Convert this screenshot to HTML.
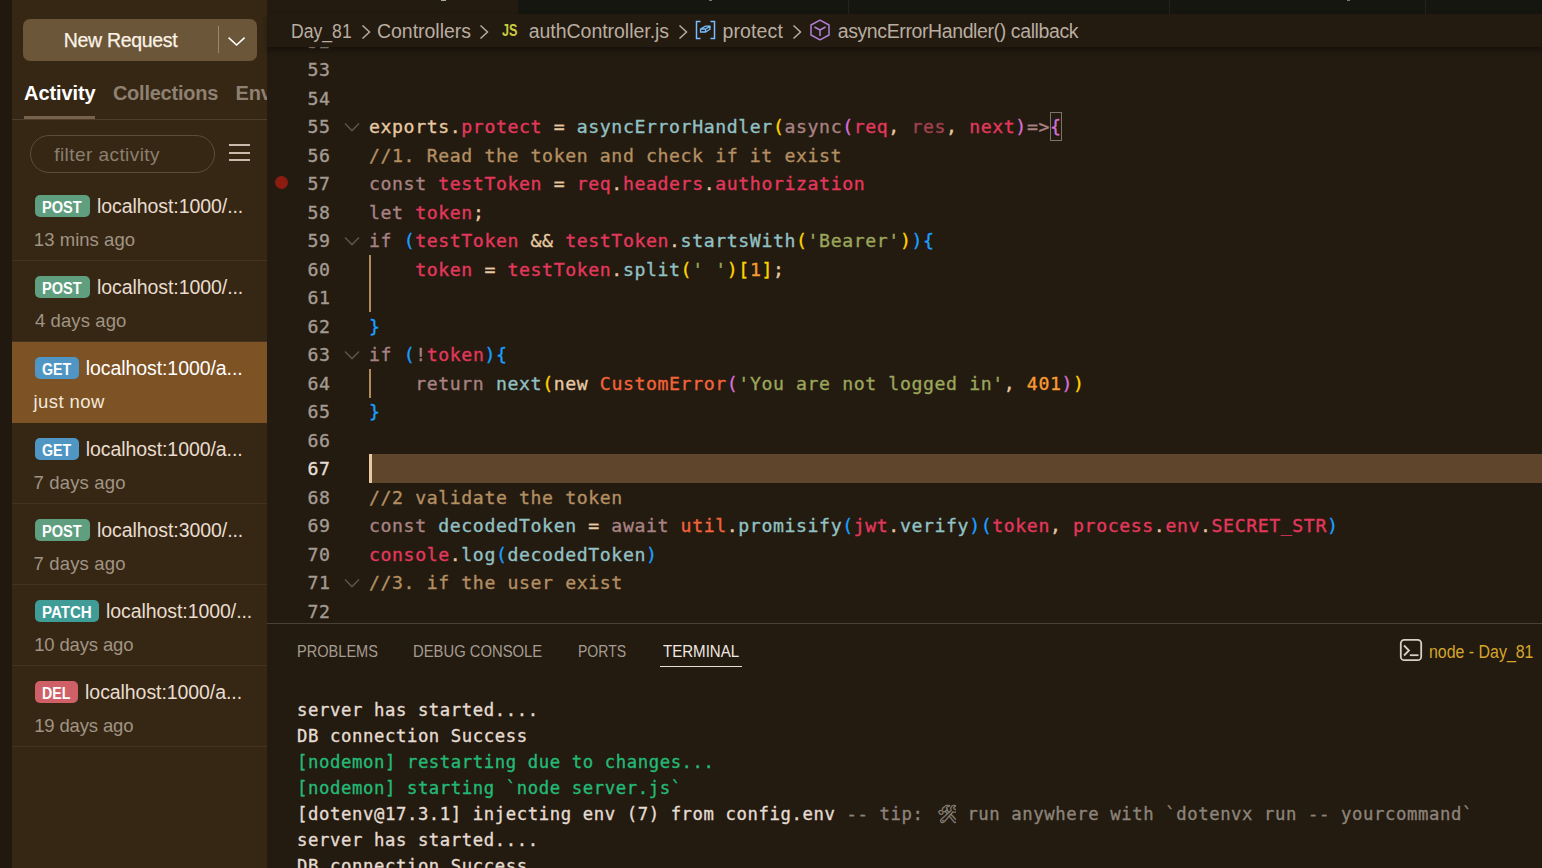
<!DOCTYPE html>
<html lang="en">
<head>
<meta charset="utf-8">
<title>authController.js - Day_81</title>
<style>
*{box-sizing:border-box;margin:0;padding:0}
html,body{width:1542px;height:868px;overflow:hidden;background:#231a10}
body{position:relative;font-family:"Liberation Sans",sans-serif;color:#e8dccf}
.abs{position:absolute}
/* ---------- left strip + sidebar ---------- */
#strip{left:0;top:0;width:12px;height:868px;background:#211810}
#side{left:12px;top:0;width:255px;height:868px;background:#362714;overflow:hidden}
#newreq{left:11px;top:19px;width:234px;height:42px;background:#6b5639;border-radius:7px}
#newreq .t{left:40.8px;top:0;height:42px;line-height:42px;font-size:19.5px;color:#fbf3e6;letter-spacing:-0.32px;white-space:nowrap;-webkit-text-stroke:.25px}
#newreq .d{left:195px;top:7px;width:1px;height:27px;background:#9a8769}
#tabs span{position:absolute;top:79.5px;font-weight:bold;font-size:20px;line-height:26px;white-space:nowrap}
#tabline{left:0;top:119px;width:255px;height:1px;background:#4d3d2b}
#tabul{left:12px;top:116px;width:71px;height:3px;background:#77634b}
#filter{left:18px;top:135px;width:185px;height:38px;border:1px solid #5c4c39;border-radius:19px}
#filter span{position:absolute;left:23.2px;top:0px;line-height:38px;font-size:19px;color:#8c7f70;letter-spacing:0.44px;white-space:nowrap}
.hb{left:217px;width:21px;height:2px;background:#c9bcae}
.item{left:0;width:255px;height:81px;border-bottom:1px solid #42321f}
.item.sel{background:#7d5225;border-bottom-color:#7d5225}
.badge{position:absolute;left:23px;top:15px;height:22px;border-radius:5px}
.badge b{position:absolute;left:7px;top:1.5px;color:#fff;font-weight:bold;font-size:16px;line-height:22px;white-space:nowrap;transform-origin:0 50%}
.url{position:absolute;top:12px;font-size:19.5px;line-height:28px;color:#e8dccf;white-space:nowrap;letter-spacing:-0.07px}
.ago{position:absolute;left:22px;top:47px;font-size:18.5px;line-height:26px;color:#a09484;white-space:nowrap}
.sel .ago{color:#f3e9dc}
.sel .url{color:#fff}
.post{background:#5f9e7e;width:55px}
.get{background:#4f96c4;width:44px}
.patch{background:#3f9c97;width:64px}
.del{background:#cf6068;width:43px}
/* ---------- editor ---------- */
#tabstrip{left:518px;top:0;width:1024px;height:14px;background:#15160f}
.tsep{top:0;width:1px;height:14px;background:#27231a}
#crumbs{left:267px;top:14px;width:1275px;height:33px;background:#231a10;box-shadow:0 3px 5px rgba(0,0,0,.36)}
#crumbs span{position:absolute;top:3px;font-size:19.5px;line-height:28px;color:#b9ada0;white-space:nowrap;transform-origin:0 50%}
.chev{position:absolute;top:9.7px;width:10px;height:16px;fill:none;stroke:#b9ada0;stroke-width:1.5}
#code{left:267px;top:47px;width:1275px;height:576px;overflow:hidden;font-family:"DejaVu Sans Mono","Liberation Mono",monospace;font-size:18.2px;letter-spacing:.59px;-webkit-text-stroke:.35px}
.ln{position:absolute;left:0;width:63.6px;margin-top:1px;text-align:right;height:28.5px;line-height:28.5px;color:#a39b92;white-space:pre}
.cl{position:absolute;left:102px;margin-top:1px;height:28.5px;line-height:28.5px;white-space:pre;color:#e6c9a2}
.fold{position:absolute;left:77px;width:16px;height:10px}
.guide{position:absolute;left:102px;width:2px;background:#b08a5a}
#curline{left:102px;top:407px;width:1173px;height:29px;background:#5f452c}
#cursor{left:102px;top:407px;width:3px;height:29px;background:#e8c9a0}
#bp{left:8px;top:129px;width:13px;height:13px;border-radius:50%;background:#8c1c12}
.k{color:#a88383}.r{color:#e3385d}.rd{color:#a2414f}.f{color:#92c1c4}.y{color:#ffd400}.p{color:#d76fd6}.b{color:#1a9fff}
.c{color:#b38f62}.s{color:#9ba65b}.n{color:#f89a33}.o{color:#f2643a}.w{color:#e6c9a2}
/* ---------- panel ---------- */
#panelline{left:267px;top:623px;width:1275px;height:1px;background:#4b4035}
#ptabs span{position:absolute;top:641px;font-size:17px;line-height:22px;color:#a69c92;white-space:nowrap;transform-origin:0 50%}
#ptul{left:660px;top:666px;width:82px;height:1px;background:#e6ded6}
#term{left:297px;top:697px;width:1245px;height:172px;overflow:hidden;font-family:"DejaVu Sans Mono","Liberation Mono",monospace;font-size:17.3px;letter-spacing:.585px;color:#e4dcd2;-webkit-text-stroke:.35px}
#term div{height:26px;line-height:26px;white-space:pre}
.emo{display:inline-block;width:22px;padding-left:3px;height:26px;overflow:hidden;vertical-align:top;letter-spacing:0;text-align:center;font-size:18px}
.g{color:#23ba76}.dim{color:#8c847a}
</style>
</head>
<body>
<div id="strip" class="abs"></div>

<div id="side" class="abs">
  <div id="newreq" class="abs">
    <div class="t abs">New Request</div>
    <div class="d abs"></div>
    <svg class="abs" style="left:204px;top:16px" width="20" height="12" viewBox="0 0 20 12"><path d="M1.6 2.6 L9.6 10 L17.6 2.6" fill="none" stroke="#fff" stroke-width="1.6"/></svg>
  </div>
  <div id="tabs">
    <span style="left:12.1px;color:#fff;letter-spacing:-0.11px">Activity</span>
    <span style="left:100.9px;color:#8e8172;letter-spacing:-0.24px">Collections</span>
    <span style="left:223.6px;color:#8e8172;letter-spacing:-0.2px">Env</span>
  </div>
  <div id="tabul" class="abs"></div>
  <div id="tabline" class="abs"></div>
  <div id="filter" class="abs"><span>filter activity</span></div>
  <div class="hb abs" style="top:144px"></div>
  <div class="hb abs" style="top:152px"></div>
  <div class="hb abs" style="top:159px"></div>

  <div class="item abs" style="top:180px"><div class="badge post"><b style="transform:scaleX(.912)">POST</b></div><div class="url" style="left:85px">localhost:1000/...</div><div class="ago" style="left:21.8px;letter-spacing:.05px">13 mins ago</div></div>
  <div class="item abs" style="top:261px"><div class="badge post"><b style="transform:scaleX(.912)">POST</b></div><div class="url" style="left:85px">localhost:1000/...</div><div class="ago" style="left:23px;letter-spacing:.09px">4 days ago</div></div>
  <div class="item sel abs" style="top:342px"><div class="badge get"><b style="transform:scaleX(.891)">GET</b></div><div class="url" style="left:73.7px">localhost:1000/a...</div><div class="ago" style="left:21.6px;letter-spacing:.4px">just now</div></div>
  <div class="item abs" style="top:423px"><div class="badge get"><b style="transform:scaleX(.891)">GET</b></div><div class="url" style="left:73.7px">localhost:1000/a...</div><div class="ago" style="left:21.6px;letter-spacing:.15px">7 days ago</div></div>
  <div class="item abs" style="top:504px"><div class="badge post"><b style="transform:scaleX(.912)">POST</b></div><div class="url" style="left:85px">localhost:3000/...</div><div class="ago" style="left:21.6px;letter-spacing:.15px">7 days ago</div></div>
  <div class="item abs" style="top:585px"><div class="badge patch"><b style="transform:scaleX(.943)">PATCH</b></div><div class="url" style="left:94px">localhost:1000/...</div><div class="ago" style="left:22.2px;letter-spacing:-.15px">10 days ago</div></div>
  <div class="item abs" style="top:666px"><div class="badge del"><b style="transform:scaleX(.887)">DEL</b></div><div class="url" style="left:73.1px">localhost:1000/a...</div><div class="ago" style="left:22.2px;letter-spacing:-.15px">19 days ago</div></div>
</div>

<div id="tabstrip" class="abs"></div>
<div class="abs" style="left:441px;top:0;width:5px;height:1px;background:#a9ad9f"></div>
<div class="abs" style="left:709px;top:0;width:3px;height:1px;background:#77776e"></div>
<div class="abs" style="left:1347px;top:0;width:3px;height:1px;background:#77776e"></div>
<div class="tsep abs" style="left:848px"></div>
<div class="tsep abs" style="left:1169px"></div>
<div class="tsep abs" style="left:1425px"></div>

<div id="code" class="abs">
  <div id="curline" class="abs"></div>
  <div id="cursor" class="abs"></div>
  <div id="bp" class="abs"></div>
  <div class="abs" style="left:783px;top:65px;width:12px;height:29px;border:1px solid #7d756b"></div>
  <div class="guide" style="top:208px;height:57px"></div>
  <div class="guide" style="top:322px;height:28.5px"></div>
<!--CODE-->
  <div class="ln" style="top:-20.25px">52</div>
  <div class="ln" style="top:8.25px">53</div>
  <div class="ln" style="top:36.75px">54</div>
  <div class="ln" style="top:65.25px">55</div>
  <svg class="fold" style="top:74.75px" viewBox="0 0 16 10"><path d="M1 1.5 L8 8.5 L15 1.5" fill="none" stroke="#5e5246" stroke-width="1.6"/></svg>
  <div class="cl" style="top:65.25px"><span class="w">exports.</span><span class="r">protect</span><span class="w"> = </span><span class="f">asyncErrorHandler</span><span class="y">(</span><span class="k">async</span><span class="p">(</span><span class="r">req</span><span class="w">, </span><span class="rd">res</span><span class="w">, </span><span class="r">next</span><span class="p">)</span><span class="k">=&gt;</span><span class="p bx">{</span></div>
  <div class="ln" style="top:93.75px">56</div>
  <div class="cl" style="top:93.75px"><span class="c">//1. Read the token and check if it exist</span></div>
  <div class="ln" style="top:122.25px">57</div>
  <div class="cl" style="top:122.25px"><span class="k">const </span><span class="r">testToken</span><span class="w"> = </span><span class="r">req</span><span class="w">.</span><span class="r">headers</span><span class="w">.</span><span class="r">authorization</span></div>
  <div class="ln" style="top:150.75px">58</div>
  <div class="cl" style="top:150.75px"><span class="k">let </span><span class="r">token</span><span class="w">;</span></div>
  <div class="ln" style="top:179.25px">59</div>
  <svg class="fold" style="top:188.75px" viewBox="0 0 16 10"><path d="M1 1.5 L8 8.5 L15 1.5" fill="none" stroke="#5e5246" stroke-width="1.6"/></svg>
  <div class="cl" style="top:179.25px"><span class="k">if </span><span class="b">(</span><span class="r">testToken</span><span class="w"> &amp;&amp; </span><span class="r">testToken</span><span class="w">.</span><span class="f">startsWith</span><span class="y">(</span><span class="s">'Bearer'</span><span class="y">)</span><span class="b">){</span></div>
  <div class="ln" style="top:207.75px">60</div>
  <div class="cl" style="top:207.75px"><span class="w">    </span><span class="r">token</span><span class="w"> = </span><span class="r">testToken</span><span class="w">.</span><span class="f">split</span><span class="y">(</span><span class="s">' '</span><span class="y">)[</span><span class="n">1</span><span class="y">]</span><span class="w">;</span></div>
  <div class="ln" style="top:236.25px">61</div>
  <div class="ln" style="top:264.75px">62</div>
  <div class="cl" style="top:264.75px"><span class="b">}</span></div>
  <div class="ln" style="top:293.25px">63</div>
  <svg class="fold" style="top:302.75px" viewBox="0 0 16 10"><path d="M1 1.5 L8 8.5 L15 1.5" fill="none" stroke="#5e5246" stroke-width="1.6"/></svg>
  <div class="cl" style="top:293.25px"><span class="k">if </span><span class="b">(</span><span class="k">!</span><span class="r">token</span><span class="b">){</span></div>
  <div class="ln" style="top:321.75px">64</div>
  <div class="cl" style="top:321.75px"><span class="w">    </span><span class="k">return </span><span class="f">next</span><span class="y">(</span><span class="w">new </span><span class="o">CustomError</span><span class="p">(</span><span class="s">'You are not logged in'</span><span class="w">, </span><span class="n">401</span><span class="p">)</span><span class="y">)</span></div>
  <div class="ln" style="top:350.25px">65</div>
  <div class="cl" style="top:350.25px"><span class="b">}</span></div>
  <div class="ln" style="top:378.75px">66</div>
  <div class="ln" style="top:407.25px;color:#e6ded5">67</div>
  <div class="ln" style="top:435.75px">68</div>
  <div class="cl" style="top:435.75px"><span class="c">//2 validate the token</span></div>
  <div class="ln" style="top:464.25px">69</div>
  <div class="cl" style="top:464.25px"><span class="k">const </span><span class="f">decodedToken</span><span class="w"> = </span><span class="k">await </span><span class="o">util</span><span class="w">.</span><span class="f">promisify</span><span class="b">(</span><span class="r">jwt</span><span class="w">.</span><span class="f">verify</span><span class="b">)(</span><span class="r">token</span><span class="w">, </span><span class="r">process</span><span class="w">.</span><span class="r">env</span><span class="w">.</span><span class="r">SECRET_STR</span><span class="b">)</span></div>
  <div class="ln" style="top:492.75px">70</div>
  <div class="cl" style="top:492.75px"><span class="r">console</span><span class="w">.</span><span class="f">log</span><span class="b">(</span><span class="f">decodedToken</span><span class="b">)</span></div>
  <div class="ln" style="top:521.25px">71</div>
  <svg class="fold" style="top:530.75px" viewBox="0 0 16 10"><path d="M1 1.5 L8 8.5 L15 1.5" fill="none" stroke="#5e5246" stroke-width="1.6"/></svg>
  <div class="cl" style="top:521.25px"><span class="c">//3. if the user exist</span></div>
  <div class="ln" style="top:549.75px">72</div>
<!--/CODE-->
</div>

<div id="crumbs" class="abs">
  <span style="left:23.9px;transform:scaleX(.903)">Day_81</span>
  <svg class="chev" style="left:94px" viewBox="0 0 10 16"><path d="M1.5 1.5 L8.5 8 L1.5 14.5"/></svg>
  <span style="left:110px;letter-spacing:-.03px">Controllers</span>
  <svg class="chev" style="left:211.5px" viewBox="0 0 10 16"><path d="M1.5 1.5 L8.5 8 L1.5 14.5"/></svg>
  <span style="left:235.4px;top:6px;font-size:16px;line-height:22px;font-weight:bold;color:#cbcb41;transform:scaleX(.79)">JS</span>
  <span style="left:261.7px;letter-spacing:-.03px">authController.js</span>
  <svg class="chev" style="left:410.5px" viewBox="0 0 10 16"><path d="M1.5 1.5 L8.5 8 L1.5 14.5"/></svg>
  <svg class="abs" style="left:428px;top:6px" width="21" height="20" viewBox="0 0 21 20" fill="none" stroke="#75beff" stroke-width="1.5"><path d="M5.5 1.5 H1.5 V18.5 H5.5 M15.5 1.5 H19.5 V18.5 H15.5"/><path d="M5.5 9 L10.5 6.2 H15 V9.2 L10.5 12 H5.5 Z M5.5 9 H10.5 V12 M10.5 9 L15 6.4" stroke-width="1.3"/></svg>
  <span style="left:455.4px;letter-spacing:.15px">protect</span>
  <svg class="chev" style="left:525px" viewBox="0 0 10 16"><path d="M1.5 1.5 L8.5 8 L1.5 14.5"/></svg>
  <svg class="abs" style="left:542px;top:5px" width="22" height="22" viewBox="0 0 22 22" fill="none" stroke="#b180d7" stroke-width="1.5" stroke-linejoin="round"><path d="M11 1.2 L20 6 V16 L11 20.8 L2 16 V6 Z"/><path d="M5.5 8 L11 11 L16.5 8 M11 11 V17"/></svg>
  <span style="left:570.7px;letter-spacing:-.39px">asyncErrorHandler() callback</span>
</div>

<div id="panelline" class="abs"></div>
<div id="ptabs">
  <span style="left:296.5px;transform:scaleX(.857)">PROBLEMS</span>
  <span style="left:413px;transform:scaleX(.871)">DEBUG CONSOLE</span>
  <span style="left:577.5px;transform:scaleX(.825)">PORTS</span>
  <span style="left:662.6px;transform:scaleX(.886);color:#f0e8e0">TERMINAL</span>
  <span style="left:1428.8px;transform:scaleX(.91);color:#d6a62c;font-size:17.5px">node - Day_81</span>
</div>
<svg class="abs" style="left:1399px;top:638px" width="24" height="24" viewBox="0 0 24 24" fill="none" stroke="#d8cfc5" stroke-width="1.8"><rect x="1.8" y="1.8" width="20.4" height="20.4" rx="3.5"/><path d="M5 7.5 L10 12.5 L5 17.5" /><path d="M10.8 17.2 H19.5"/></svg>
<div id="ptul" class="abs"></div>
<div id="term" class="abs">
<div>server has started....</div>
<div>DB connection Success</div>
<div class="g">[nodemon] restarting due to changes...</div>
<div class="g">[nodemon] starting `node server.js`</div>
<div>[dotenv@17.3.1] injecting env (7) from config.env <span class="dim">-- tip: <span class="emo">🛠</span> run anywhere with `dotenvx run -- yourcommand`</span></div>
<div>server has started....</div>
<div>DB connection Success</div>
</div>
</body>
</html>
